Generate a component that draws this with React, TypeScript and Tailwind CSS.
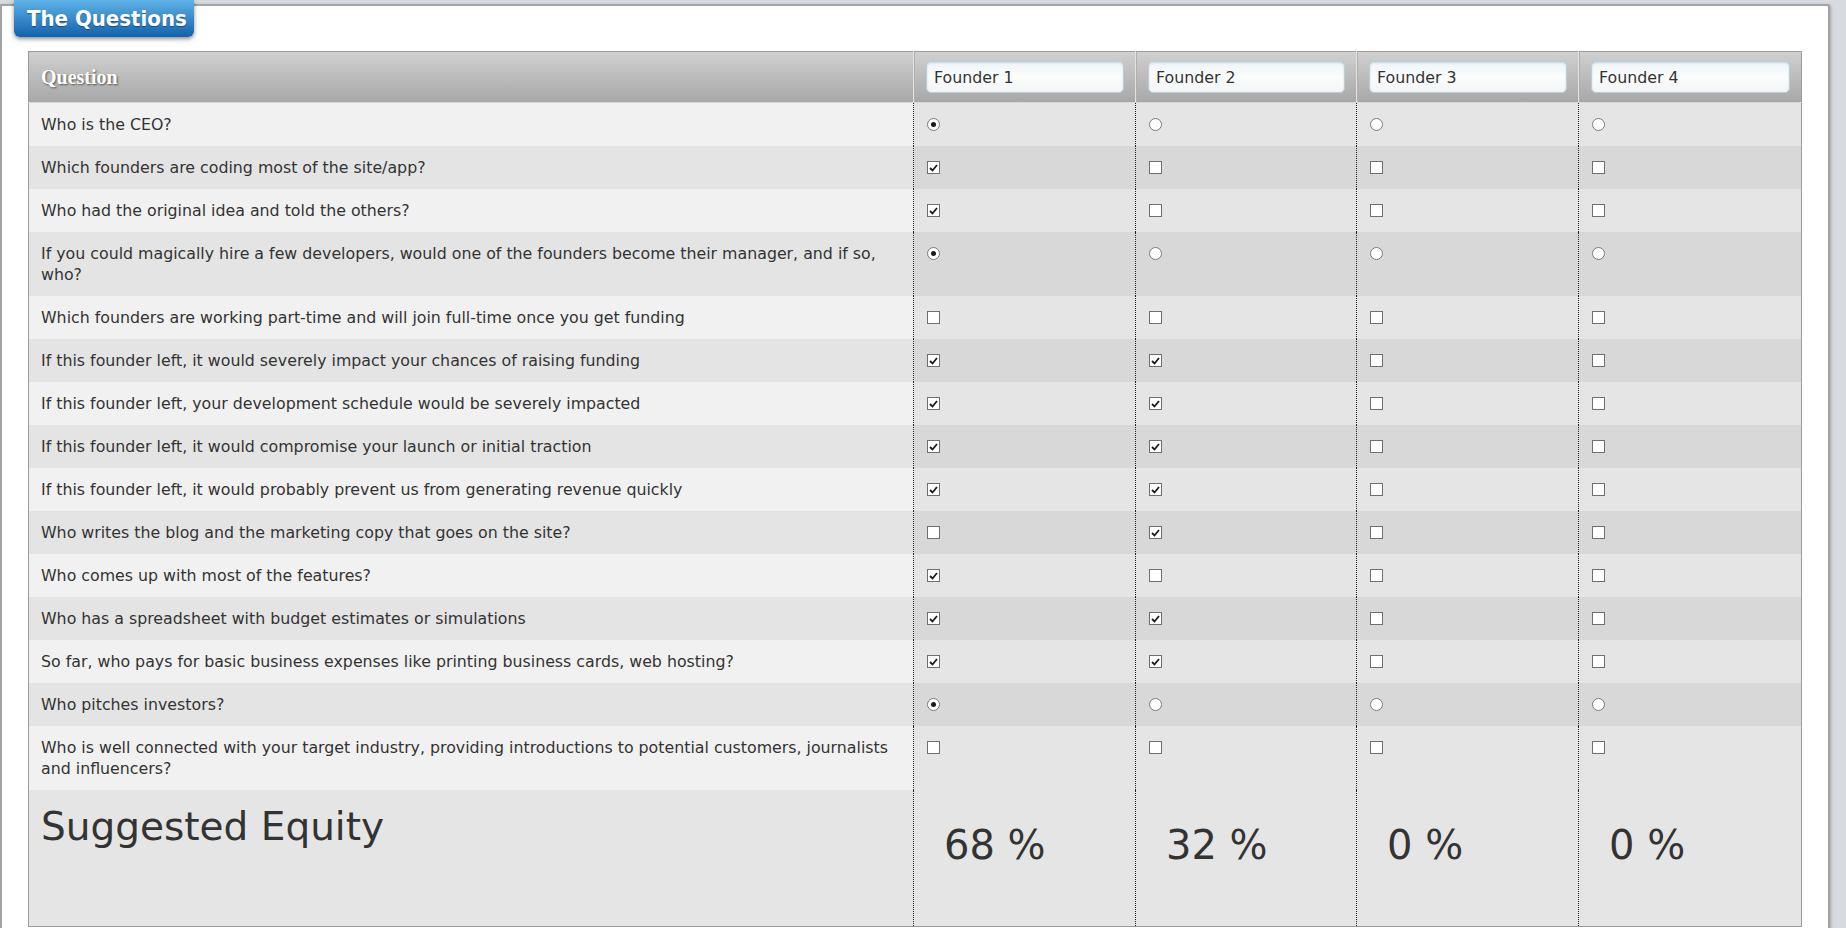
import * as React from "react";

type Kind = "radio" | "check";

const founders = ["Founder 1", "Founder 2", "Founder 3", "Founder 4"];

const questions: { text: string; kind: Kind; picked: number[] }[] = [
  { text: "Who is the CEO?", kind: "radio", picked: [0] },
  { text: "Which founders are coding most of the site/app?", kind: "check", picked: [0] },
  { text: "Who had the original idea and told the others?", kind: "check", picked: [0] },
  {
    text: "If you could magically hire a few developers, would one of the founders become their manager, and if so, who?",
    kind: "radio",
    picked: [0],
  },
  {
    text: "Which founders are working part-time and will join full-time once you get funding",
    kind: "check",
    picked: [],
  },
  {
    text: "If this founder left, it would severely impact your chances of raising funding",
    kind: "check",
    picked: [0, 1],
  },
  {
    text: "If this founder left, your development schedule would be severely impacted",
    kind: "check",
    picked: [0, 1],
  },
  {
    text: "If this founder left, it would compromise your launch or initial traction",
    kind: "check",
    picked: [0, 1],
  },
  {
    text: "If this founder left, it would probably prevent us from generating revenue quickly",
    kind: "check",
    picked: [0, 1],
  },
  { text: "Who writes the blog and the marketing copy that goes on the site?", kind: "check", picked: [1] },
  { text: "Who comes up with most of the features?", kind: "check", picked: [0] },
  { text: "Who has a spreadsheet with budget estimates or simulations", kind: "check", picked: [0, 1] },
  {
    text: "So far, who pays for basic business expenses like printing business cards, web hosting?",
    kind: "check",
    picked: [0, 1],
  },
  { text: "Who pitches investors?", kind: "radio", picked: [0] },
  {
    text: "Who is well connected with your target industry, providing introductions to potential customers, journalists and influencers?",
    kind: "check",
    picked: [],
  },
];

const equity = ["68 %", "32 %", "0 %", "0 %"];

function Radio({ on }: { on: boolean }) {
  return (
    <span className="flex h-[13px] w-[13px] items-center justify-center rounded-full border border-[#7a7a7a] bg-white">
      {on && <span className="h-[5px] w-[5px] rounded-full bg-[#1a1a1a]" />}
    </span>
  );
}

function Check({ on }: { on: boolean }) {
  return (
    <span className="flex h-[13px] w-[13px] items-center justify-center border border-[#6f6f6f] bg-white">
      {on && (
        <svg width="9" height="8" viewBox="0 0 9 8">
          <path d="M1 4 L3.5 6.5 L8 1" fill="none" stroke="#1a1a1a" strokeWidth="1.8" />
        </svg>
      )}
    </span>
  );
}

export default function App() {
  return (
    <div className="min-h-[928px] overflow-hidden bg-[#d7dadf] font-['DejaVu_Sans',sans-serif] text-[#333]">
      <div className="relative mt-[4px] h-[940px] w-[1830px] rounded-tr-[3px] border-2 border-[#a3a3a3] bg-white shadow-[1px_1px_3px_rgba(0,0,0,0.25)]">
        <div className="absolute left-[12px] top-[-6px] flex h-[37px] w-[180px] items-center rounded-b-[6px] bg-gradient-to-b from-[#5fb3e8] to-[#0d62ad] pl-[13px] font-['DejaVu_Sans_Condensed','DejaVu_Sans',sans-serif] text-[22px] font-bold text-white shadow-[0_2px_4px_rgba(0,0,0,0.45)] [text-shadow:0_1px_1px_rgba(0,0,0,0.35)]">
          The Questions
        </div>

        <table className="ml-[26px] mt-[45px] w-[1773px] table-fixed border-collapse border border-[#9b9b9b] text-[15.8px] leading-[21px]">
          <colgroup>
            <col className="w-[885px]" />
            <col className="w-[222px]" />
            <col className="w-[221px]" />
            <col className="w-[222px]" />
            <col className="w-[223px]" />
          </colgroup>
          <thead>
            <tr className="h-[51px] bg-gradient-to-b from-[#d0d0d0] to-[#a7a7a7]">
              <th className="border-b border-[#d6d6d6] px-[12px] text-left align-middle font-['Liberation_Serif',serif] text-[20px] font-bold text-white [text-shadow:1px_1px_2px_rgba(0,0,0,0.55)]">
                Question
              </th>
              {founders.map((f) => (
                <th
                  key={f}
                  className="border-b border-l border-b-[#d6d6d6] border-l-[#e2e2e2] pl-[12px] pr-[11px] align-middle font-normal shadow-[inset_1px_0_0_#b0b0b0]"
                >
                  <div className="flex h-[32px] items-center rounded-[5px] border border-[#b9ced8] bg-gradient-to-b from-[#eef5f8] via-[#fbfcfc] to-[#f3f5f6] pl-[7px] text-left text-[15.8px] text-[#333] shadow-[inset_0_1px_2px_rgba(120,150,170,0.35)]">
                    {f}
                  </div>
                </th>
              ))}
            </tr>
          </thead>
          <tbody>
            {questions.map((q, i) => {
              const odd = i % 2 === 0;
              return (
                <tr key={i}>
                  <td
                    className={`px-[12px] py-[11px] align-top ${odd ? "bg-[#f1f1f1]" : "bg-[#e4e4e4]"}`}
                  >
                    {q.text}
                  </td>
                  {founders.map((f, j) => (
                    <td
                      key={f}
                      className={`border-l border-dotted border-[#222] pl-[13px] pt-[15px] align-top ${
                        odd ? "bg-[#e5e5e5]" : "bg-[#d8d8d8]"
                      }`}
                    >
                      {q.kind === "radio" ? (
                        <Radio on={q.picked.includes(j)} />
                      ) : (
                        <Check on={q.picked.includes(j)} />
                      )}
                    </td>
                  ))}
                </tr>
              );
            })}
            <tr className="h-[136px] bg-[#e5e5e5]">
              <td className="px-[12px] pt-[13px] align-top text-[39px] leading-[48px]">Suggested Equity</td>
              {equity.map((e, j) => (
                <td
                  key={j}
                  className="border-l border-dotted border-[#222] pl-[30px] pt-[31px] align-top text-[40px] leading-[48px]"
                >
                  {e}
                </td>
              ))}
            </tr>
          </tbody>
        </table>
      </div>
    </div>
  );
}
